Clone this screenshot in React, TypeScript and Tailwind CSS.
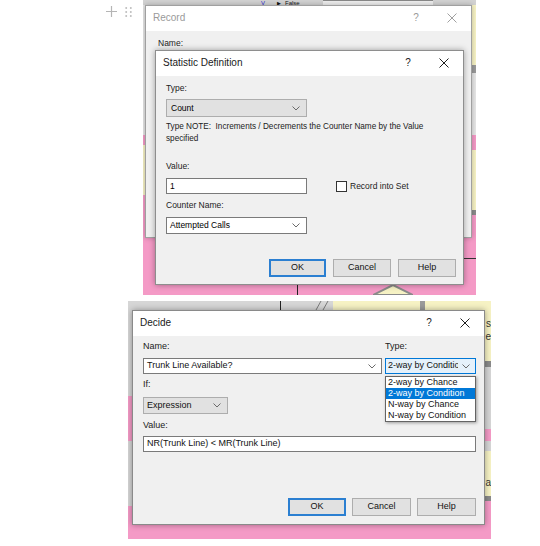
import React from "react"

function Chevron() {
  return (
    <svg width="8" height="5" viewBox="0 0 8 5" className="shrink-0">
      <path d="M0.5 0.5 L4 4 L7.5 0.5" fill="none" stroke="#6b6b6b" strokeWidth="1" />
    </svg>
  )
}

function CloseX({ color = "#1f1f1f" }: { color?: string }) {
  return (
    <svg width="10" height="10" viewBox="0 0 10 10">
      <path d="M0.5 0.5 L9.5 9.5 M9.5 0.5 L0.5 9.5" stroke={color} strokeWidth="1" />
    </svg>
  )
}

function TitleBar({ title, dim }: { title: string; dim?: boolean }) {
  const c = dim ? "text-[#9a9a9a]" : "text-[#1a1a1a]"
  return (
    <div className="flex h-[25px] items-center bg-white pb-[2px] pl-[7px] pr-[14px]">
      <span className={`text-[10px] ${c}`}>{title}</span>
      <span className={`ml-auto w-[10px] text-center text-[10px] ${c}`}>?</span>
      <span className="ml-[26px] flex w-[10px] items-center">
        <CloseX color={dim ? "#a0a0a0" : "#1f1f1f"} />
      </span>
    </div>
  )
}

function Label({ children, className = "" }: { children: React.ReactNode; className?: string }) {
  return <div className={`h-[12px] leading-[12px] text-[#222] ${className}`}>{children}</div>
}

function Button({ children, primary, w }: { children: string; primary?: boolean; w: string }) {
  return (
    <div
      className={`flex h-[18px] items-center justify-center bg-[#e1e1e1] text-[#111] ${w} ${
        primary ? "border-2 border-[#2b7fd1]" : "border border-[#adadad]"
      }`}
    >
      {children}
    </div>
  )
}

function StatisticDialog() {
  return (
    <div className="absolute left-[12px] top-[50px] flex h-[235px] w-[309px] flex-col border border-[#8e8e8e] bg-[#f0f0f0] shadow-[0_0_6px_rgba(0,0,0,0.35)]">
      <TitleBar title="Statistic Definition" />
      <div className="flex flex-col pl-[10px] pr-[7px] text-[8.5px]">
        <Label className="mt-[6px]">Type:</Label>
        <div className="mt-[5px] flex h-[18px] w-[141px] items-center justify-between border border-[#adadad] bg-[#e1e1e1] pl-[4px] pr-[6px]">
          <span>Count</span>
          <Chevron />
        </div>
        <div className="mt-[4px] whitespace-pre text-[8.2px] leading-[12px] text-[#222]">
          {"Type NOTE:  Increments / Decrements the Counter Name by the Value\nspecified"}
        </div>
        <Label className="mt-[15px]">Value:</Label>
        <div className="mt-[6px] flex items-center">
          <div className="flex h-[16px] w-[141px] items-center border border-[#7a7a7a] bg-white pl-[3px]">1</div>
          <div className="ml-[29px] h-[11px] w-[11px] border border-[#333] bg-white" />
          <span className="ml-[3px] text-[#222]">Record into Set</span>
        </div>
        <Label className="mt-[5px]">Counter Name:</Label>
        <div className="mt-[6px] flex h-[17px] w-[141px] items-center justify-between border border-[#7a7a7a] bg-white pl-[3px] pr-[6px]">
          <span>Attempted Calls</span>
          <Chevron />
        </div>
        <div className="mt-[25px] flex justify-end gap-[7px] text-[9px]">
          <Button primary w="w-[57px]">OK</Button>
          <Button w="w-[58px]">Cancel</Button>
          <Button w="w-[58px]">Help</Button>
        </div>
      </div>
    </div>
  )
}

function RecordDialog() {
  return (
    <div className="absolute left-[2px] top-[5px] flex h-[233px] w-[327px] flex-col border border-[#a0a0a0] bg-[#f0f0f0] shadow-[0_0_5px_rgba(0,0,0,0.25)]">
      <TitleBar title="Record" dim />
      <div className="pl-[12px] pt-[6px] text-[8.5px] text-[#222]">Name:</div>
    </div>
  )
}

function TopShot() {
  return (
    <div className="relative h-[295px] w-[333px] overflow-hidden bg-[#e6e6e6]">
      {/* model canvas peeking around the dialogs */}
      <div className="absolute left-0 top-0 h-[5px] w-full bg-[#d2d2d2]" />
      <div className="absolute left-[118px] top-0 text-[6px] leading-[6px] text-[#2a2ad0]">V</div>
      <div className="absolute left-[134px] top-0 flex items-center gap-[4px] text-[6px] leading-[6px] text-[#111]">
        <span className="text-[5px]">▶</span>False
      </div>
      <div className="absolute left-[180px] top-0 h-[5px] w-[110px] border-t border-[#888] bg-[#eeeeee]" />
      <div className="absolute left-0 top-[135px] h-[160px] w-full bg-[#f49ac6]" />
      <div className="absolute left-0 top-[145px] h-[50px] w-[8px] bg-[#f6f2c4]" />
      <div className="absolute right-0 top-[5px] h-[60px] w-[6px] bg-[#f6f2c4]" />
      <div className="absolute right-0 top-[65px] h-[8px] w-[6px] bg-[#9a9a9a]" />
      <div className="absolute right-0 top-[150px] h-[60px] w-[6px] bg-[#f6f2c4]" />
      <div className="absolute right-0 top-[210px] h-[5px] w-[6px] bg-[#8a8a8a]" />
      <div className="absolute left-[154px] top-[280px] h-[15px] w-px bg-[#222]" />
      <svg className="absolute left-[230px] top-[284px]" width="40" height="11" viewBox="0 0 40 11">
        <polygon points="0,11 20,1 40,11" fill="#f6f2c4" stroke="#8a8a8a" strokeWidth="2" />
      </svg>
      <div className="absolute right-0 top-[258px] h-px w-[12px] bg-[#333]" />
      <RecordDialog />
      <StatisticDialog />
    </div>
  )
}

function DecideDialog() {
  const items = ["2-way by Chance", "2-way by Condition", "N-way by Chance", "N-way by Condition"]
  return (
    <div className="absolute left-[4px] top-[9px] flex h-[215px] w-[353px] flex-col border border-[#8a8a8a] bg-[#f0f0f0] shadow-[0_0_6px_rgba(0,0,0,0.35)]">
      <TitleBar title="Decide" />
      <div className="flex flex-col pl-[10px] pr-[8px] text-[9px] text-[#111]">
        <div className="mt-[4px] flex">
          <Label className="w-[242px]">Name:</Label>
          <Label>Type:</Label>
        </div>
        <div className="mt-[6px] flex items-start">
          <div className="flex h-[16px] w-[239px] items-center justify-between border border-[#7a7a7a] bg-white pl-[3px] pr-[5px]">
            <span>Trunk Line Available?</span>
            <Chevron />
          </div>
          <div className="relative ml-[3px]">
            <div className="flex h-[16px] w-[91px] items-center border border-[#0078d7] bg-[#e5f1fb] pl-[2px] pr-[5px]">
              <span className="w-[70px] overflow-hidden whitespace-nowrap">2-way by Condition</span>
              <span className="ml-auto">
                <Chevron />
              </span>
            </div>
            <div className="absolute left-0 top-[18px] z-10 w-[91px] border border-[#646464] bg-white shadow-[1px_1px_3px_rgba(0,0,0,0.35)]">
              {items.map((it, i) => (
                <div
                  key={it}
                  className={`h-[11px] whitespace-nowrap pl-[2px] leading-[11px] ${
                    i === 1 ? "bg-[#0078d7] text-white" : "text-[#111]"
                  }`}
                >
                  {it}
                </div>
              ))}
            </div>
          </div>
        </div>
        <Label className="mt-[4px]">If:</Label>
        <div className="mt-[7px] flex h-[17px] w-[85px] items-center justify-between border border-[#adadad] bg-[#e1e1e1] pl-[3px] pr-[6px]">
          <span>Expression</span>
          <Chevron />
        </div>
        <Label className="mt-[5px]">Value:</Label>
        <div className="mt-[5px] flex h-[16px] w-[333px] items-center border border-[#7a7a7a] bg-white pl-[3px]">
          NR(Trunk Line) &lt; MR(Trunk Line)
        </div>
        <div className="mt-[46px] flex justify-end gap-[6px]">
          <Button primary w="w-[58px]">OK</Button>
          <Button w="w-[59px]">Cancel</Button>
          <Button w="w-[59px]">Help</Button>
        </div>
      </div>
    </div>
  )
}

function BottomShot() {
  return (
    <div className="relative h-[238px] w-[363px] overflow-hidden bg-[#d6d6d6]">
      <div className="absolute left-[152px] top-0 h-[9px] w-px bg-[#222]" />
      <svg className="absolute left-[185px] top-0" width="20" height="9" viewBox="0 0 20 9">
        <path d="M3 9 L8 0 M10 9 L15 0" stroke="#7a7a7a" strokeWidth="1" />
      </svg>
      <div className="absolute left-[205px] top-0 h-[9px] w-[87px] bg-[#f6f2c4]" />
      <div className="absolute left-[292px] top-0 h-[9px] w-[5px] bg-[#9a9a9a]" />
      <div className="absolute left-[297px] top-0 h-[9px] w-[66px] bg-[#f6f2c4]" />
      <div className="absolute right-0 top-0 h-[60px] w-[7px] bg-[#f6f2c4]" />
      <div className="absolute right-[0px] top-[17px] text-[10px] leading-[12px] text-[#333]">s</div>
      <div className="absolute right-[0px] top-[30px] text-[10px] leading-[12px] text-[#333]">e</div>
      <div className="absolute right-0 top-[60px] h-[6px] w-[7px] bg-[#8a8a8a]" />
      <div className="absolute right-0 top-[128px] h-[12px] w-[7px] bg-[#f49ac6]" />
      <div className="absolute right-0 top-[150px] h-[45px] w-[7px] bg-[#f6f2c4]" />
      <div className="absolute right-0 top-[176px] text-[10px] leading-[12px] text-[#333]">a</div>
      <div className="absolute right-0 top-[195px] h-[5px] w-[7px] bg-[#8a8a8a]" />
      <div className="absolute left-0 top-[95px] h-[45px] w-[4px] bg-[#f49ac6]" />
      <div className="absolute bottom-0 left-0 h-[16px] w-full bg-[#f49ac6]" />
      <div className="absolute right-0 top-[200px] h-[38px] w-[7px] bg-[#f49ac6]" />
      <div className="absolute left-0 top-[205px] h-[33px] w-[4px] bg-[#f49ac6]" />
      <DecideDialog />
    </div>
  )
}

function DragHandle() {
  return (
    <div className="flex items-center gap-[8px] pt-[6px]">
      <svg width="11" height="11" viewBox="0 0 11 11">
        <path d="M5.5 0 V11 M0 5.5 H11" stroke="#b5b5b5" strokeWidth="1.2" />
      </svg>
      <svg width="7" height="10" viewBox="0 0 7 10">
        {[1, 5, 9].map((y) => (
          <g key={y}>
            <circle cx="1.2" cy={y} r="1" fill="#bdbdbd" />
            <circle cx="5.8" cy={y} r="1" fill="#bdbdbd" />
          </g>
        ))}
      </svg>
    </div>
  )
}

export default function App() {
  return (
    <div className="h-[546px] w-[540px] overflow-hidden bg-white font-['Liberation_Sans',Arial,sans-serif]">
      <div className="flex items-start">
        <div className="flex w-[143px] items-start justify-start pl-[106px]">
          <DragHandle />
        </div>
        <TopShot />
      </div>
      <div className="ml-[128px] mt-[6px]">
        <BottomShot />
      </div>
    </div>
  )
}
